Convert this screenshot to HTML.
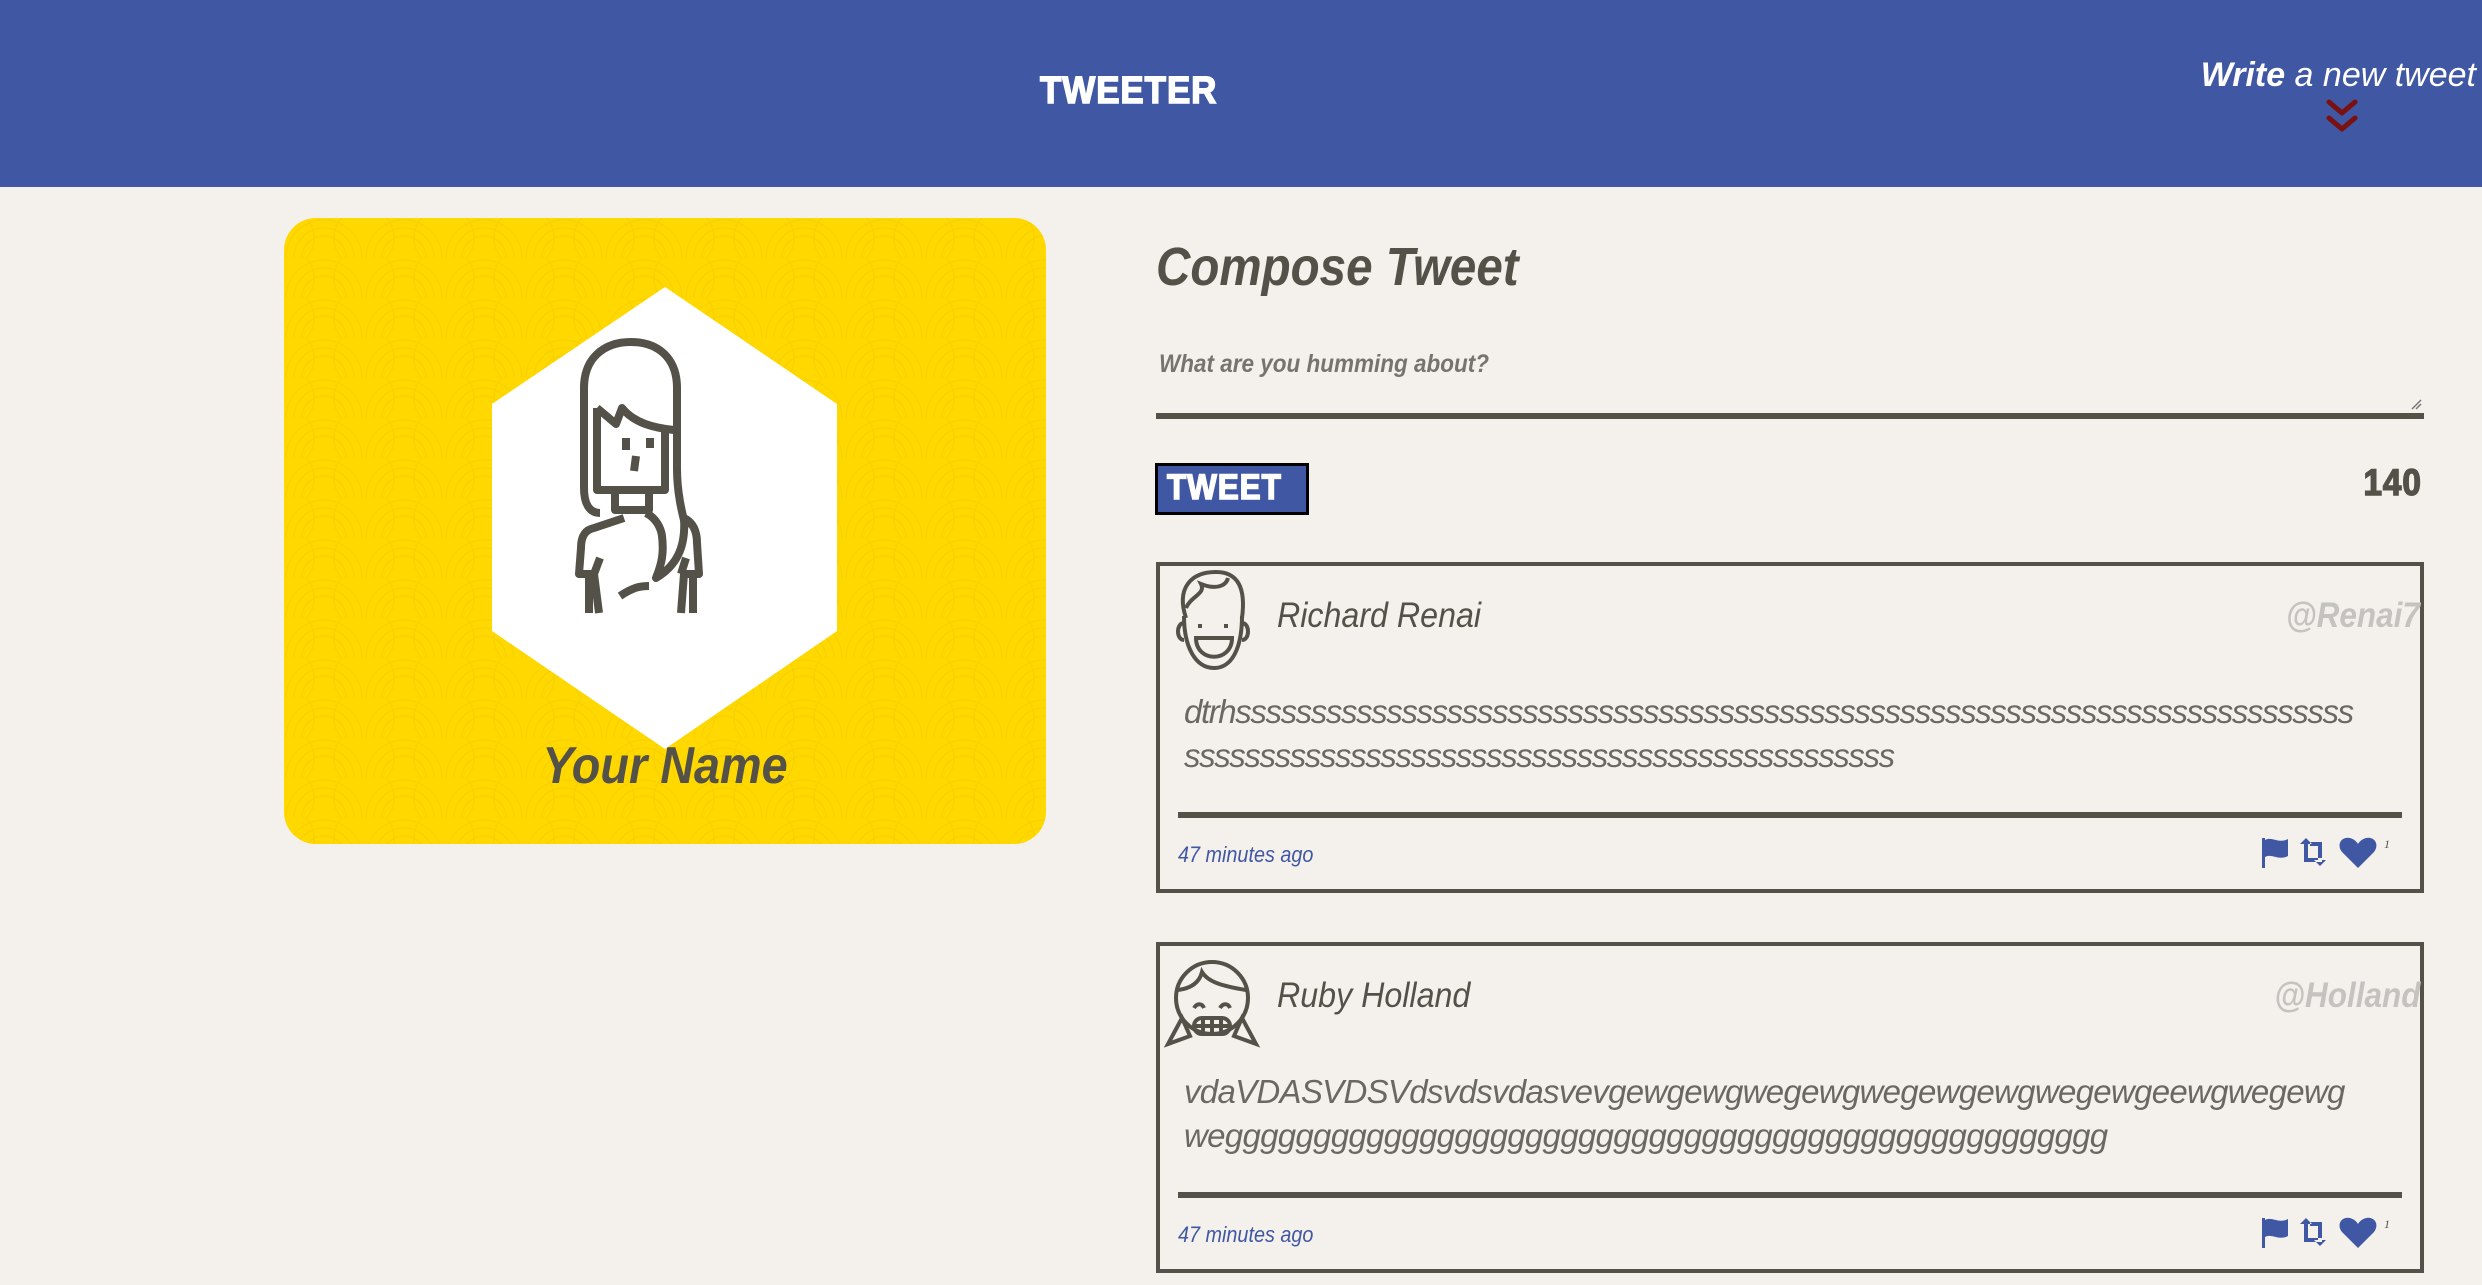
<!DOCTYPE html>
<html><head><meta charset="utf-8">
<style>
*{margin:0;padding:0;box-sizing:border-box}
body{width:2482px;height:1285px;background:#f4f1ec;font-family:"Liberation Sans",sans-serif;color:#545149;position:relative;overflow:hidden}
.abs{position:absolute;white-space:nowrap}
header{position:absolute;left:0;top:0;width:2482px;height:187px;background:#4057a3}
.bung{font-family:"Liberation Sans",sans-serif;font-weight:900;letter-spacing:1px;-webkit-text-stroke:1.5px currentColor}
.it{font-style:italic}
.card{position:absolute;left:284px;top:218px;width:762px;height:626px;border-radius:32px;background:#ffd800;overflow:hidden}
.tweet{position:absolute;left:1156px;width:1268px;height:331px;border:4px solid #545149}
.tweet .name{position:absolute;left:117px;top:30px;font-size:35px;font-style:italic;color:#545149;transform:scaleX(.92);transform-origin:left}
.tweet .handle{position:absolute;right:0;top:30px;font-size:35px;font-style:italic;font-weight:bold;color:#c5c3bf;transform:scaleX(.9);transform-origin:right}
.tweet .body{position:absolute;left:24px;top:124px;width:1220px;font-size:33px;font-style:italic;color:#6b6862;line-height:44px;letter-spacing:-1.4px;overflow:hidden;white-space:nowrap}
.tweet .div{position:absolute;left:18px;top:246px;width:1224px;height:6px;background:#545149}
.tweet .time{position:absolute;left:18px;top:276px;font-size:22px;font-style:italic;color:#4057a3;transform:scaleX(.9);transform-origin:left}
.tweet .icons{position:absolute;left:1098px;top:268px}
</style></head><body>
<header>
<div class="abs bung" style="left:1040px;top:70px;font-size:38px;color:#fff;transform:scaleX(.92);transform-origin:left">TWEETER</div>
<div class="abs" style="right:6px;top:56px;font-size:34px;color:#fff;font-style:italic"><b>Write</b> a new tweet</div>
<svg class="abs" style="left:2325px;top:98px" width="34" height="38" viewBox="0 0 34 38"><path d="M4 4 L17 15 L30 4 M4 20 L17 31 L30 20" fill="none" stroke="#7a1010" stroke-width="5" stroke-linecap="round" stroke-linejoin="round"/></svg>
</header>

<div class="card">
<svg width="762" height="626" style="position:absolute;left:0;top:0">
<defs><pattern id="sc" width="80" height="40" patternUnits="userSpaceOnUse">
<g fill="none" stroke="#f2cc00" stroke-width="1.2" opacity=".6">
<circle cx="40" cy="40" r="38"/><circle cx="40" cy="40" r="30"/><circle cx="40" cy="40" r="22"/>
<circle cx="0" cy="20" r="30"/><circle cx="80" cy="20" r="30"/></g></pattern></defs>
<rect width="762" height="626" fill="url(#sc)"/>
<polygon points="381,69 553,186 553,413 381,531 208,413 208,186" fill="#fff"/>
<g fill="none" stroke="#545149" stroke-width="8" stroke-linejoin="round">
<path d="M316 295 C305 295 300 285 300 270 L300 170 C300 140 320 124 347 124 C374 124 393 140 393 170 L393 250 C393 275 398 295 402 310"/>
<path d="M313 190 L332 206 L338 190 C350 205 370 210 390 212"/>
<path d="M313 190 L313 272 L381 272 L381 212"/>
<path d="M331 272 L331 292 L365 292 L365 272"/>
<path d="M342 220 L342 232 M366 220 L366 230 M352 238 L350 253"/>
<path d="M340 300 L310 310 C300 312 297 320 297 330 L295 356 L310 356 M362 295 C372 300 377 310 378 318 C380 335 378 345 372 360 C392 348 402 330 400 300 C410 305 413 315 413 325 L415 356 L400 356"/>
<path d="M316 340 L310 356 L315 395 M400 356 L397 395 M402 340 L397 356"/>
<path d="M305 356 L305 395 M409 356 L409 395"/>
<path d="M336 378 C348 370 355 368 365 368"/>
</g>
</svg>
<div class="abs it" style="left:0;width:762px;text-align:center;top:518px;font-size:52px;font-weight:bold;color:#545149;transform:scaleX(.9)">Your Name</div>
</div>

<div class="abs it" style="left:1156px;top:236px;font-size:54px;font-weight:bold;transform:scaleX(.88);transform-origin:left">Compose Tweet</div>
<div class="abs it" style="left:1159px;top:350px;font-size:25px;font-weight:bold;color:#77746f;transform:scaleX(.9);transform-origin:left">What are you humming about?</div>
<svg class="abs" style="left:2410px;top:398px" width="12" height="12"><path d="M2 11 L11 2 M6 11 L11 6" stroke="#777" stroke-width="1.5"/></svg>
<div class="abs" style="left:1156px;top:413px;width:1268px;height:6px;background:#545149"></div>

<div class="abs" style="left:1155px;top:463px;width:154px;height:52px;background:#4057a3;border:3px solid #000"></div>
<div class="abs bung" style="left:1167px;top:468px;font-size:35px;color:#fff;transform:scaleX(.9);transform-origin:left">TWEET</div>
<div class="abs bung" style="right:60px;top:462px;font-size:37px;color:#545149;transform:scaleX(.9);transform-origin:right">140</div>

<div class="tweet" style="top:562px">
<svg class="abs" style="left:6px;top:2px" width="92" height="104" viewBox="0 0 92 104"><g fill="none" stroke="#545149" stroke-width="4"><path d="M20 50 C10 20 25 4 50 4 C72 4 80 20 76 50"/><path d="M20 40 C25 28 40 26 35 16 C50 22 60 18 62 10"/><path d="M18 48 C18 80 30 100 48 100 C66 100 76 80 76 48"/><path d="M18 55 C10 55 10 72 18 72 M76 55 C84 55 84 72 76 72"/><path d="M30 70 C30 95 66 95 66 70 Z"/><path d="M34 56 L34 60 M60 56 L60 60"/></g></svg>
<div class="name">Richard Renai</div>
<div class="handle">@Renai7</div>
<div class="body">dtrhssssssssssssssssssssssssssssssssssssssssssssssssssssssssssssssssssssssssss<br>sssssssssssssssssssssssssssssssssssssssssssssss</div>
<div class="div"></div>
<div class="time">47 minutes ago</div>
<svg class="icons" width="140" height="36" viewBox="0 0 140 36"><g fill="#4057a3"><path d="M4 4 L7 4 L7 34 L4 34 Z M7 6 C14 2 20 10 30 5 L30 22 C20 27 14 19 7 23 Z"/><path d="M42 10 L48 4 L54 10 L50 10 L50 24 L64 24 L64 28 L46 28 L46 10 Z M60 12 L60 26 L56 26 L62 32 L68 26 L64 26 L64 8 L52 8 L52 12 Z"/><path d="M100 34 L84 18 C78 10 84 2 92 4 C96 5 99 8 100 10 C101 8 104 5 108 4 C116 2 122 10 116 18 Z"/></g><text x="126" y="14" font-size="12" font-style="italic" fill="#545149" font-family="Liberation Serif">1</text></svg>
</div>

<div class="tweet" style="top:942px">
<svg class="abs" style="left:4px;top:2px" width="100" height="104" viewBox="0 0 100 104"><g fill="none" stroke="#545149" stroke-width="4"><circle cx="48" cy="50" r="36"/><path d="M14 42 C30 40 36 32 38 24 C44 34 58 38 82 42"/><path d="M18 70 L4 96 L26 88 Z M78 70 L92 96 L70 88 Z"/><path d="M30 60 C33 55 38 55 40 60 M56 60 C59 55 64 55 66 60"/><rect x="30" y="70" width="36" height="16" rx="8"/><path d="M30 78 L66 78 M39 70 L39 86 M48 70 L48 86 M57 70 L57 86"/></g></svg>
<div class="name">Ruby Holland</div>
<div class="handle">@Holland</div>
<div class="body" style="letter-spacing:-0.7px">vdaVDASVDSVdsvdsvdasvevgewgewgwegewgwegewgewgwegewgeewgwegewg<br>wegggggggggggggggggggggggggggggggggggggggggggggggggg</div>
<div class="div"></div>
<div class="time">47 minutes ago</div>
<svg class="icons" width="140" height="36" viewBox="0 0 140 36"><g fill="#4057a3"><path d="M4 4 L7 4 L7 34 L4 34 Z M7 6 C14 2 20 10 30 5 L30 22 C20 27 14 19 7 23 Z"/><path d="M42 10 L48 4 L54 10 L50 10 L50 24 L64 24 L64 28 L46 28 L46 10 Z M60 12 L60 26 L56 26 L62 32 L68 26 L64 26 L64 8 L52 8 L52 12 Z"/><path d="M100 34 L84 18 C78 10 84 2 92 4 C96 5 99 8 100 10 C101 8 104 5 108 4 C116 2 122 10 116 18 Z"/></g><text x="126" y="14" font-size="12" font-style="italic" fill="#545149" font-family="Liberation Serif">1</text></svg>
</div>
</body></html>
